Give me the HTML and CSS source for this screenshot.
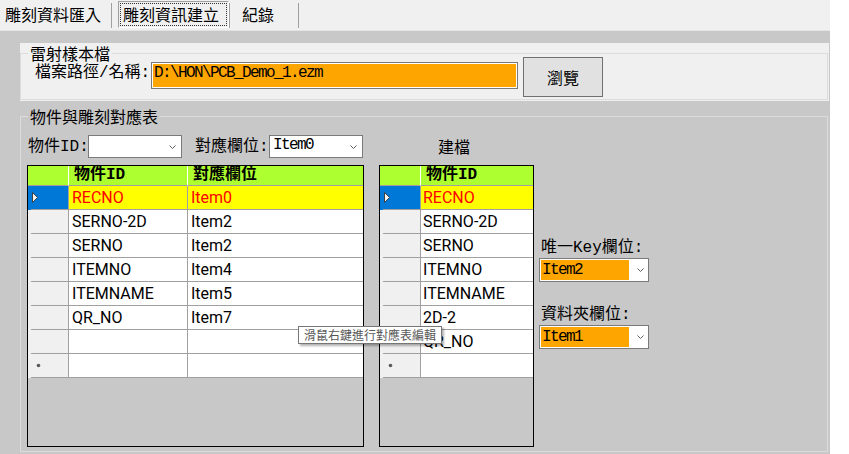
FILE: index.html
```html
<!DOCTYPE html>
<html lang="zh-Hant">
<head>
<meta charset="utf-8">
<title>雕刻資訊建立</title>
<link rel="stylesheet" href="styles.css">
</head>
<body>
<div class="window">
  <div class="tabs">
    <div class="tab t1">雕刻資料匯入</div>
    <div class="sep"></div>
    <div class="tab t2"><span class="focus">雕刻資訊建立</span></div>
    <div class="sep"></div>
    <div class="tab t3">紀錄</div>
    <div class="sep"></div>
  </div>
  <div class="panel">
    <div class="g1wrap">
      <div class="group g1">
        <div class="gtitle">雷射樣本檔</div>
        <div class="filerow">
          <span class="lbl flabel">檔案路徑/名稱:</span>
          <div class="textbox">D:\HON\PCB_Demo_1.ezm</div>
          <div class="button">瀏覽</div>
        </div>
      </div>
    </div>
    <div class="group g2">
      <div class="gtitle">物件與雕刻對應表</div>
      <div class="g2body">
        <div class="colA">
          <div class="toolbar">
            <span class="lbl l1">物件ID:</span>
            <div class="combo cw"><span class="ctext"></span><svg class="chev" width="7" height="4" viewBox="0 0 7 4"><path d="M0.5 0.5 L3.5 3.5 L6.5 0.5" fill="none" stroke="#606060"/></svg></div>
            <span class="lbl l2">對應欄位:</span>
            <div class="combo cw"><span class="ctext mono">Item0</span><svg class="chev" width="7" height="4" viewBox="0 0 7 4"><path d="M0.5 0.5 L3.5 3.5 L6.5 0.5" fill="none" stroke="#606060"/></svg></div>
          </div>
          <div class="dgv dgvL">
            <div class="row hdr">
              <div class="cell rh"></div>
              <div class="cell c1">物件ID</div>
              <div class="cell c2 last">對應欄位</div>
            </div>
            <div class="row sel">
              <div class="cell rh cur"><svg width="6" height="11" viewBox="0 0 6 11"><path d="M0.5 0.5 L5.5 5.5 L0.5 10.5 Z" fill="#f4f4f4" stroke="#404040"/></svg></div>
              <div class="cell c1">RECNO</div>
              <div class="cell c2 last">Item0</div>
            </div>
            <div class="row"><div class="cell rh"></div><div class="cell c1">SERNO-2D</div><div class="cell c2 last">Item2</div></div>
            <div class="row"><div class="cell rh"></div><div class="cell c1">SERNO</div><div class="cell c2 last">Item2</div></div>
            <div class="row"><div class="cell rh"></div><div class="cell c1">ITEMNO</div><div class="cell c2 last">Item4</div></div>
            <div class="row"><div class="cell rh"></div><div class="cell c1">ITEMNAME</div><div class="cell c2 last">Item5</div></div>
            <div class="row"><div class="cell rh"></div><div class="cell c1">QR_NO</div><div class="cell c2 last">Item7</div></div>
            <div class="row"><div class="cell rh"></div><div class="cell c1"></div><div class="cell c2 last"></div></div>
            <div class="row"><div class="cell rh star"><svg width="5" height="5" viewBox="0 0 5 5"><circle cx="2.5" cy="2.5" r="1.8" fill="#5a5a5a"/></svg></div><div class="cell c1"></div><div class="cell c2 last"></div></div>
          </div>
        </div>
        <div class="colB">
          <div class="caption">建檔</div>
          <div class="dgv dgvR">
            <div class="row hdr">
              <div class="cell rh"></div>
              <div class="cell c1 last">物件ID</div>
            </div>
            <div class="row sel">
              <div class="cell rh cur"><svg width="6" height="11" viewBox="0 0 6 11"><path d="M0.5 0.5 L5.5 5.5 L0.5 10.5 Z" fill="#f4f4f4" stroke="#404040"/></svg></div>
              <div class="cell c1 last">RECNO</div>
            </div>
            <div class="row"><div class="cell rh"></div><div class="cell c1 last">SERNO-2D</div></div>
            <div class="row"><div class="cell rh"></div><div class="cell c1 last">SERNO</div></div>
            <div class="row"><div class="cell rh"></div><div class="cell c1 last">ITEMNO</div></div>
            <div class="row"><div class="cell rh"></div><div class="cell c1 last">ITEMNAME</div></div>
            <div class="row"><div class="cell rh"></div><div class="cell c1 last">2D-2</div></div>
            <div class="row"><div class="cell rh"></div><div class="cell c1 last">QR_NO</div></div>
            <div class="row"><div class="cell rh star"><svg width="5" height="5" viewBox="0 0 5 5"><circle cx="2.5" cy="2.5" r="1.8" fill="#5a5a5a"/></svg></div><div class="cell c1 last"></div></div>
          </div>
        </div>
        <div class="colC">
          <div class="lbl flbl">唯一Key欄位:</div>
          <div class="ocombo"><span class="otext mono">Item2</span><svg class="chev" width="7" height="4" viewBox="0 0 7 4"><path d="M0.5 0.5 L3.5 3.5 L6.5 0.5" fill="none" stroke="#606060"/></svg></div>
          <div class="lbl flbl second">資料夾欄位:</div>
          <div class="ocombo"><span class="otext mono">Item1</span><svg class="chev" width="7" height="4" viewBox="0 0 7 4"><path d="M0.5 0.5 L3.5 3.5 L6.5 0.5" fill="none" stroke="#606060"/></svg></div>
        </div>
      </div>
      <div class="tooltip">滑鼠右鍵進行對應表編輯</div>
    </div>
  </div>
</div>
</body>
</html>
```
FILE: styles.css
```css
* { box-sizing: border-box; }
html, body { margin: 0; padding: 0; background: #ffffff; }
body {
  width: 849px;
  height: 454px;
  overflow: hidden;
  font-family: "Noto Sans CJK TC", "Noto Sans", sans-serif;
  font-size: 16px;
  color: #000;
}
.window { width: 830px; height: 454px; }

/* tabs */
.tabs {
  display: flex;
  align-items: flex-start;
  height: 31px;
  background: #f0f0f0;
  border-bottom: 1px solid #e4e4e4;
}
.tab { line-height: 28px; white-space: nowrap; }
.t1 { padding: 0 10px 0 5px; }
.sep { width: 1px; height: 25px; margin-top: 3px; background: #a0a0a0; }
.t2 {
  margin-left: 6px;
  margin-top: 1px;
  width: 111px;
  height: 27px;
  border: 1px solid;
  border-color: #a0a0a0 #ffffff #ffffff #a0a0a0;
}
.t2 .focus {
  display: block;
  margin: 1px;
  height: 23px;
  border: 1px dotted #333;
  padding: 0 2px;
  line-height: 21px;
}
.t3 { margin-left: 12px; padding-right: 24px; }

/* panel */
.panel {
  height: 423px;
  background: #c8c8c8;
  padding: 12px 0 0 20px;
}
.g1wrap {
  width: 809px;
  height: 58px;
  background: #f0f0f0;
  padding-top: 10px;
}
.group {
  width: 808px;
  border: 1px solid #dcdcdc;
}
.g1 { height: 47px; }
.gtitle {
  width: fit-content;
  line-height: 20px;
  height: 20px;
  margin: -11px 0 -9px 7px;
  padding: 0 2px;
  position: relative;
}
.g1 .gtitle { background: #f0f0f0; }
.g2 .gtitle { background: #c8c8c8; }

.lbl {
  font-family: "Liberation Mono", "Noto Sans CJK TC", monospace;
  font-size: 16px;
  line-height: 20px;
  white-space: nowrap;
}
.mono {
  font-family: "Liberation Mono", monospace;
  font-size: 16px;
  letter-spacing: -1.6px;
}

.filerow {
  display: flex;
  align-items: flex-start;
  padding-left: 14px;
}
.flabel { width: 116px; margin-top: 9px; }
.textbox {
  margin-top: 8px;
  width: 367px;
  height: 27px;
  border: 1px solid #7a7a7a;
  box-shadow: inset 0 0 0 1px #ffffff;
  background: #ffa500;
  padding: 1px 0 0 2px;
  font-family: "Liberation Mono", monospace;
  font-size: 16px;
  letter-spacing: -1.6px;
  line-height: 18px;
  white-space: nowrap;
}
.button {
  margin-left: 5px;
  margin-top: 3px;
  width: 80px;
  height: 40px;
  background: #e1e1e1;
  border: 1px solid #707070;
  display: flex;
  align-items: center;
  justify-content: center;
  line-height: 20px;
}

/* group 2 */
.g2 {
  margin-top: 15px;
  height: 336px;
  position: relative;
}
.g2body {
  display: flex;
  align-items: flex-start;
  padding-left: 6px;
}
.colA { width: 337px; }
.toolbar {
  margin-top: 18px;
  height: 23px;
  display: flex;
  align-items: center;
}
.l1 { width: 60px; margin-left: 1px; }
.l2 { width: 74px; margin-left: 13px; }
.combo {
  height: 23px;
  background: #ffffff;
  border: 1px solid #7a7a7a;
  display: flex;
  align-items: center;
  justify-content: space-between;
  padding: 0 5px 0 3px;
}
.cw { width: 94px; }
.ctext { line-height: 20px; margin-top: -3px; }
.chev { display: block; flex: none; }

/* data grid */
.dgv {
  margin-top: 7px;
  height: 282px;
  border: 1px solid #000;
  background: #c8c8c8;
}
.dgvL { width: 337px; }
.dgvR { width: 155px; }
.row { display: flex; height: 24px; }
.row.hdr { height: 20px; }
.cell {
  height: 100%;
  border-right: 1px solid #a0a0a0;
  border-bottom: 1px solid #a0a0a0;
  background: #ffffff;
  font-family: Roboto, "Noto Sans CJK TC", sans-serif;
  font-size: 16px;
  line-height: 23px;
  padding-left: 3px;
  white-space: nowrap;
  overflow: hidden;
}
.cell.last { border-right: none; }
.rh {
  width: 41px;
  flex: none;
  border-bottom: none;
  background: linear-gradient(#a0a0a0, #a0a0a0) no-repeat right bottom / calc(100% - 3px) 1px, #f0f0f0;
  display: flex;
  align-items: center;
}
.rh.cur {
  background: linear-gradient(#a0a0a0, #a0a0a0) no-repeat right bottom / calc(100% - 3px) 1px, #0078d7;
  padding-left: 4px;
  padding-bottom: 1px;
}
.rh.star { padding-left: 8px; padding-bottom: 1px; }
.dgvL .c1 { width: 119px; flex: none; }
.dgvL .c2 { width: 175px; flex: none; }
.dgvR .c1 { width: 112px; flex: none; }
.dgvR .c1 { padding-left: 2px; }

.hdr .cell {
  background: #adff2f;
  border-right: 1px solid #ffffff;
  border-bottom: 1px solid #a0a0a0;
  font-family: "Liberation Mono", "Noto Sans CJK TC", monospace;
  font-weight: bold;
  line-height: 19px;
  padding-left: 5px;
}
.hdr .cell.last { border-right: none; }
.sel .cell:not(.rh) { background: #ffff00; color: #ff0000; }

.colB { width: 155px; margin-left: 15px; }
.caption {
  margin-top: 18px;
  height: 23px;
  line-height: 23px;
  padding-left: 59px;
}

.colC { margin-left: 5px; margin-top: 121px; }
.flbl { padding-left: 2px; }
.flbl.second { margin-top: 23px; }
.ocombo {
  width: 110px;
  height: 24px;
  border: 1px solid #7a7a7a;
  background: #ffffff;
  padding: 1px;
  display: flex;
  align-items: center;
}
.otext {
  width: 88px;
  height: 20px;
  background: #ffa500;
  line-height: 20px;
  padding-left: 1px;
  white-space: nowrap;
}
.ocombo .chev { margin-left: 8px; }

.tooltip {
  position: absolute;
  left: 277px;
  top: 209px;
  width: 144px;
  height: 18px;
  background: #ffffff;
  border: 1px solid #767676;
  box-shadow: 2px 2px 2px rgba(0, 0, 0, 0.3);
  font-size: 12px;
  line-height: 16px;
  color: #575757;
  padding-left: 5px;
  white-space: nowrap;
}
```
